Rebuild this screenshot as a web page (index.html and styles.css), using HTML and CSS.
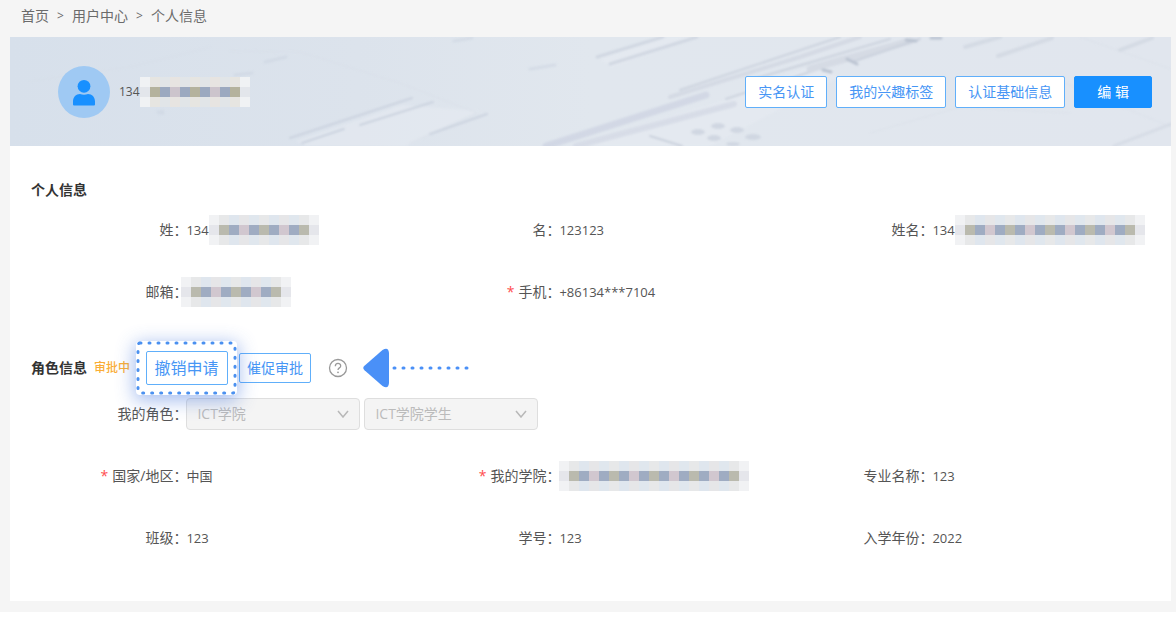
FILE: index.html
```html
<!DOCTYPE html>
<html lang="zh-CN">
<head>
<meta charset="utf-8">
<meta name="viewport" content="width=device-width, initial-scale=1">
<title>个人信息</title>
<link rel="stylesheet" href="styles.css">
</head>
<body>
<main class="page">
  <nav class="breadcrumb" aria-label="breadcrumb">
    <a href="#">首页</a><span class="sep">&gt;</span><a href="#">用户中心</a><span class="sep">&gt;</span><span>个人信息</span>
  </nav>
  <div class="card">
    <header class="banner">
      <svg class="banner-art" viewBox="0 0 1161 109" preserveAspectRatio="xMidYMid slice" aria-hidden="true">
        <defs>
          <linearGradient id="sky" x1="0" x2="1" y1="0" y2="0">
            <stop offset="0" stop-color="#d7e0eb"/><stop offset=".3" stop-color="#dce3ec"/><stop offset=".5" stop-color="#e1e7ee"/><stop offset="1" stop-color="#e1e6ee"/>
          </linearGradient>
          <filter id="soft" x="-5%" y="-20%" width="110%" height="140%"><feGaussianBlur stdDeviation="1"/></filter>
        </defs>
        <rect width="1161" height="109" fill="url(#sky)"/>
        <g filter="url(#soft)" fill="none" stroke-linecap="round" opacity=".75">
          <path d="M286 104L392 68L470 74L396 109H296ZM590 22L655 0H690L602 30ZM560 109L720 62L800 30L830 40L700 109Z" fill="#e7ebf2" opacity=".7"/>
          <path d="M220 14L290 15L390 46L467 76L400 106M200 10L120 30L20 44M770 35L910 0M1070 0L1161 32M860 96L950 70L1060 76M1040 40L1161 90" stroke="#d3dae4" opacity=".6"/>
          <path d="M280 101L402 61M292 106L334 92M350 88L423 65M420 97L477 77" stroke="#c6cedb" stroke-width="2"/>
          <path d="M255 25L276 20M148 75Q155 78 152 74M225 38L242 36M444 4L462 1M520 32L545 28" stroke="#cbd3df" stroke-width="3" opacity=".7"/>
          <path d="M587 20L653 0M600 27L687 0" stroke="#cbd2de" stroke-width="3"/>
          <path d="M536 109L696 58" stroke="#cdd3e2" stroke-width="7"/>
          <path d="M566 109L724 67" stroke="#d4d9e5" stroke-width="6"/>
          <path d="M670 53L830 0M740 43L880 2M716 62L815 30" stroke="#c6cdd9" stroke-width="2"/>
          <path d="M660 60L790 20L850 0" stroke="#d0d6e1" stroke-width="4"/>
          <path d="M800 32L900 4" stroke="#d1d7e1" stroke-width="7"/>
          <path d="M842 25L910 2M640 99L672 109" stroke="#c3cad7" stroke-width="2"/>
          <path d="M921 1H931M837 22L847 27M813 33L821 35M896 3L906 4" stroke="#aeb8c8" stroke-width="3"/>
          <path d="M955 10L990 0M988 19L1042 1M1110 13L1142 1" stroke="#d0d7e1" stroke-width="4"/>
          <path d="M1104 109L1161 87" stroke="#d4dae4" stroke-width="3"/>
          <g fill="#cbd2de" stroke="none"><ellipse cx="688" cy="95" rx="7" ry="3"/><ellipse cx="708" cy="89" rx="7" ry="3"/><ellipse cx="727" cy="93" rx="7" ry="3"/><ellipse cx="704" cy="101" rx="7" ry="3"/><ellipse cx="743" cy="100" rx="8" ry="3"/><ellipse cx="723" cy="107" rx="7" ry="2"/></g>
        </g>
      </svg>
      <svg class="avatar" viewBox="0 0 52 52" aria-hidden="true">
        <circle cx="26" cy="26" r="26" fill="#9fc9f3"/>
        <circle cx="26" cy="20.300" r="6.400" fill="#1890ff"/>
        <path d="M15 38.500V35.500c0-4.500 3-7.500 7-7.500q4 1.400 8 0c4 0 7 3 7 7.500v3q0 1-1 1H16q-1 0-1-1z" fill="#1890ff"/>
      </svg>
      <div class="account"><span>134</span><span class="mask mask-light"></span></div>
      <div class="actions">
        <button class="btn" type="button">实名认证</button>
        <button class="btn" type="button">我的兴趣标签</button>
        <button class="btn" type="button">认证基础信息</button>
        <button class="btn btn-primary" type="button">编 辑</button>
      </div>
    </header>
    <div class="body">
      <section>
        <h2 class="title">个人信息</h2>
        <dl class="fields">
          <div class="field"><dt>姓：</dt><dd>134<span class="mask"></span></dd></div>
          <div class="field"><dt>名：</dt><dd>123123</dd></div>
          <div class="field"><dt>姓名：</dt><dd>134<span class="mask mask-long"></span></dd></div>
          <div class="field"><dt>邮箱：</dt><dd><span class="mask mask-lead"></span></dd></div>
          <div class="field"><dt class="required">手机：</dt><dd>+86134***7104</dd></div>
        </dl>
      </section>
      <section>
        <div class="role-head">
          <h2 class="title">角色信息</h2>
          <span class="status">审批中</span>
          <div class="highlight">
            <svg class="dots" aria-hidden="true"><rect class="dots-line" x="2" y="2" rx="2"/></svg>
            <button class="btn btn-large" type="button">撤销申请</button>
          </div>
          <button class="btn btn-small" type="button">催促审批</button>
          <svg class="help" viewBox="0 0 20 20" role="img" aria-label="帮助">
            <circle cx="10" cy="10" r="8.500" fill="none" stroke="#999" stroke-width="1.300"/>
            <path d="M7.300 8.200C7.300 4.300 12.700 4.500 12.700 7.900C12.700 10 10 9.800 10 12" fill="none" stroke="#999" stroke-width="1.300"/>
            <circle cx="10" cy="14.300" r=".9" fill="#999"/>
          </svg>
          <svg class="pointer" viewBox="0 0 108 40" aria-hidden="true">
            <path d="M1.500 17.800L19.500 2Q25.500-1.500 26 5V35Q25.500 41.500 19.500 38L1.500 22.200Q-1 20 1.500 17.800Z" fill="#4a90f7"/>
            <path d="M31 20H106" fill="none" stroke="#4a90f7" stroke-width="3" stroke-linecap="round" stroke-dasharray="1 8"/>
          </svg>
        </div>
        <div class="fields">
          <div class="field field-wide">
            <label class="label" for="role">我的角色：</label>
            <div class="selects">
              <div class="select"><select id="role" disabled><option>ICT学院</option></select><svg class="chevron" viewBox="0 0 12 8" aria-hidden="true"><path d="M1 1L6 7L11 1" fill="none" stroke="#b8b8b8" stroke-width="1.500"/></svg></div>
              <div class="select"><select aria-label="角色类型" disabled><option>ICT学院学生</option></select><svg class="chevron" viewBox="0 0 12 8" aria-hidden="true"><path d="M1 1L6 7L11 1" fill="none" stroke="#b8b8b8" stroke-width="1.500"/></svg></div>
            </div>
          </div>
        </div>
        <dl class="fields fields-next">
          <div class="field"><dt class="required">国家/地区：</dt><dd>中国</dd></div>
          <div class="field"><dt class="required">我的学院：</dt><dd><span class="mask mask-long"></span></dd></div>
          <div class="field"><dt>专业名称：</dt><dd>123</dd></div>
          <div class="field"><dt>班级：</dt><dd>123</dd></div>
          <div class="field"><dt>学号：</dt><dd>123</dd></div>
          <div class="field"><dt>入学年份：</dt><dd>2022</dd></div>
        </dl>
      </section>
    </div>
  </div>
</main>
</body>
</html>
```
FILE: styles.css
```css
* { box-sizing: border-box; }

body {
  margin: 0;
  background: #fff;
  color: #555;
  font: 14px/22px "Open Sans", "Noto Sans CJK SC", sans-serif;
}

.page {
  padding: 0 5px 11px 10px;
  background: #f5f5f5;
}

.breadcrumb {
  display: flex;
  height: 37px;
  padding: 5px 11px;
  color: #6b6b6b;
}

.breadcrumb a { color: inherit; text-decoration: none; }
.sep { width: 23px; text-align: center; font-size: 12px; }

.card { background: #fff; }

.banner {
  position: relative;
  display: flex;
  align-items: center;
  min-height: 109px;
  padding: 0 19px 0 48px;
}

.banner > * { position: relative; }

.banner .banner-art {
  position: absolute;
  inset: 0;
  width: 100%;
  height: 100%;
}

.avatar { width: 52px; height: 52px; }

.account {
  display: flex;
  align-items: center;
  margin-left: 9px;
  font-size: 12px;
}

.actions {
  display: flex;
  gap: 9px;
  margin-left: auto;
}

.btn {
  height: 32px;
  padding: 0 12px;
  border: 1px solid #60affa;
  border-radius: 2px;
  background: #fff;
  color: #4796f5;
  font: inherit;
  line-height: 20px;
  white-space: nowrap;
}

.btn-primary {
  padding: 0 22px;
  border-color: #1890ff;
  background: #1890ff;
  color: #fff;
}

.btn-large { height: 34px; padding: 0 8px; font-size: 16px; }
.btn-small { height: 30px; padding: 0 7px; margin-left: 2px; }

.body { padding: 33px 21px 44px; }

.title {
  margin: 0;
  color: #333;
  font-size: 14px;
  line-height: 22px;
  font-weight: 700;
}

.fields {
  display: grid;
  grid-template-columns: repeat(3, 1fr);
  gap: 24px 0;
  margin: 0;
}

.title + .fields { margin-top: 10px; }
.fields-next { margin-top: 24px; }

.field {
  display: grid;
  grid-template-columns: 5fr 7fr;
  align-items: center;
  height: 38px;
}

.field-wide {
  grid-column: 1 / -1;
  grid-template-columns: 5fr 31fr;
}

dt, .label { text-align: right; white-space: nowrap; }

dd {
  display: flex;
  align-items: center;
  margin: 0;
  font-size: 13px;
  white-space: nowrap;
}

dt, .label { margin-right: -1px; }

.required::before {
  content: "*";
  margin-right: 4px;
  color: #ff4d4f;
}

/* Pixelated privacy mask: 10px tiles, three rows */
.mask {
  flex: none;
  width: 110px;
  height: 30px;
  background:
    repeating-linear-gradient(90deg, #babaae 0 10px, #9facc2 10px 20px, #d1c7cf 20px 30px, #9facc2 30px 40px) 10px 10px / calc(100% - 20px) 10px no-repeat,
    repeating-linear-gradient(90deg, #e7e8e9 0 10px, #dfe6ee 10px 20px, #e6e6e8 20px 30px, #e0e7ee 30px 40px) 10px 0 / calc(100% - 20px) 30px no-repeat,
    linear-gradient(#f1f2f4 0 10px, #e5e6eb 10px 20px, #f1f2f4 20px 30px);
}

.mask-light {
  background:
    repeating-linear-gradient(90deg, #b4b29d 0 10px, #9ba9c0 10px 20px, #ccc4cc 20px 30px, #9ba9c0 30px 40px) 10px 10px / calc(100% - 20px) 10px no-repeat,
    repeating-linear-gradient(90deg, #e6e5e1 0 10px, #e1e5e8 10px 20px, #e7e4e1 20px 30px, #e1e5e8 30px 40px) 10px 0 / calc(100% - 20px) 30px no-repeat,
    linear-gradient(#f0f2f4 0 10px, #e3e6eb 10px 20px, #f0f2f4 20px 30px);
}

.mask-long { width: 190px; }
.mask-lead { margin-left: -5px; }

.role-head {
  display: flex;
  align-items: center;
  height: 54px;
  margin-top: 30px;
}

.status {
  margin: 0 6px 0 7px;
  color: #faad35;
  font-size: 12px;
  font-weight: 500;
}

.highlight {
  position: relative;
  z-index: 1;
  display: grid;
  place-items: center;
  width: 101px;
  height: 54px;
  border-radius: 4px;
  background: #fff;
  box-shadow: 0 4px 18px 2px rgba(62, 112, 220, .45);
}

.dots {
  position: absolute;
  inset: 0;
  width: 100%;
  height: 100%;
}

.dots-line {
  width: calc(100% - 4px);
  height: calc(100% - 4px);
  fill: none;
  stroke: #4a90f0;
  stroke-width: 3px;
  stroke-linecap: round;
  stroke-dasharray: 1 8;
}

.highlight .btn { position: relative; }

.help { width: 20px; height: 20px; margin-left: 17px; }
.pointer { width: 108px; height: 40px; margin-left: 15px; }

.selects { display: flex; gap: 4px; }
.select { position: relative; width: 174px; }

.select select {
  display: block;
  width: 100%;
  height: 32px;
  padding: 0 30px 0 10px;
  border: 1px solid #dedede;
  border-radius: 4px;
  background: #f4f4f4;
  color: #bbb;
  font: inherit;
  appearance: none;
  opacity: 1;
}

.chevron {
  position: absolute;
  top: 12px;
  right: 11px;
  width: 12px;
  height: 8px;
}
```
